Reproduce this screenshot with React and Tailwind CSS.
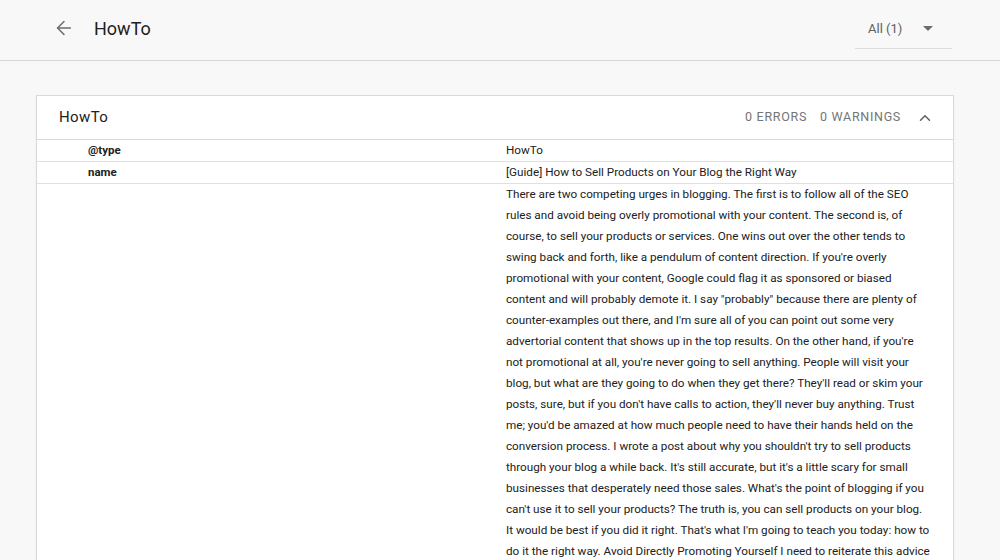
import { ArrowLeft, ChevronUp } from "lucide-react";

const description = [
  "There are two competing urges in blogging. The first is to follow all of the SEO",
  "rules and avoid being overly promotional with your content. The second is, of",
  "course, to sell your products or services. One wins out over the other tends to",
  "swing back and forth, like a pendulum of content direction. If you're overly",
  "promotional with your content, Google could flag it as sponsored or biased",
  "content and will probably demote it. I say \"probably\" because there are plenty of",
  "counter-examples out there, and I'm sure all of you can point out some very",
  "advertorial content that shows up in the top results. On the other hand, if you're",
  "not promotional at all, you're never going to sell anything. People will visit your",
  "blog, but what are they going to do when they get there? They'll read or skim your",
  "posts, sure, but if you don't have calls to action, they'll never buy anything. Trust",
  "me; you'd be amazed at how much people need to have their hands held on the",
  "conversion process. I wrote a post about why you shouldn't try to sell products",
  "through your blog a while back. It's still accurate, but it's a little scary for small",
  "businesses that desperately need those sales. What's the point of blogging if you",
  "can't use it to sell your products? The truth is, you can sell products on your blog.",
  "It would be best if you did it right. That's what I'm going to teach you today: how to",
  "do it the right way. Avoid Directly Promoting Yourself I need to reiterate this advice",
];

function Row({ label, children }) {
  return (
    <div className="flex border-b border-[#e0e0e0]">
      <div className="w-[469px] shrink-0 pl-[51px] text-[11.5px] font-bold leading-[21px] text-[#212121]">
        {label}
      </div>
      <div className="w-[440px] text-[11.7px] leading-[21px] text-[#212121]">{children}</div>
    </div>
  );
}

export default function App() {
  return (
    <div className="h-[560px] overflow-hidden bg-[#f8f8f8] font-['Roboto',sans-serif]">
      <header className="flex h-[61px] items-center border-b border-[#d6d6d6] pb-[4px] pl-[53px] pr-[48px]">
        <ArrowLeft className="h-[22px] w-[22px] text-[#6b6b6b]" strokeWidth={1.6} />
        <h1 className="ml-[19px] text-[18px] text-[#212121]">HowTo</h1>
        <div className="ml-auto mt-[2px] flex h-[40px] w-[97px] items-center border-b border-[#dcdcdc] pl-[13px]">
          <span className="text-[13px] text-[#616161]">All (1)</span>
          <svg className="ml-auto mr-[19px]" width="10" height="5" viewBox="0 0 10 5">
            <path d="M0 0h10L5 5z" fill="#6b6b6b" />
          </svg>
        </div>
      </header>

      <main className="px-[36px] pt-[34px]">
        <section className="w-[918px] border border-[#dadada] bg-white shadow-[0_1px_2px_rgba(0,0,0,0.06)]">
          <div className="flex h-[44px] items-center border-b border-[#dadada] pl-[22px] pr-[19px]">
            <h2 className="text-[15px] tracking-[0.4px] text-[#212121]">HowTo</h2>
            <div className="ml-auto flex items-center gap-[13px] text-[12.5px] tracking-[0.7px] text-[#757575]">
              <span>0 ERRORS</span>
              <span>0 WARNINGS</span>
              <ChevronUp className="ml-[2px] h-[18px] w-[18px] text-[#616161]" strokeWidth={2} />
            </div>
          </div>
          <Row label="@type">HowTo</Row>
          <Row label="name">[Guide] How to Sell Products on Your Blog the Right Way</Row>
          <Row label="">
            {description.map((line) => (
              <div key={line} className="whitespace-nowrap">
                {line}
              </div>
            ))}
          </Row>
        </section>
      </main>
    </div>
  );
}
